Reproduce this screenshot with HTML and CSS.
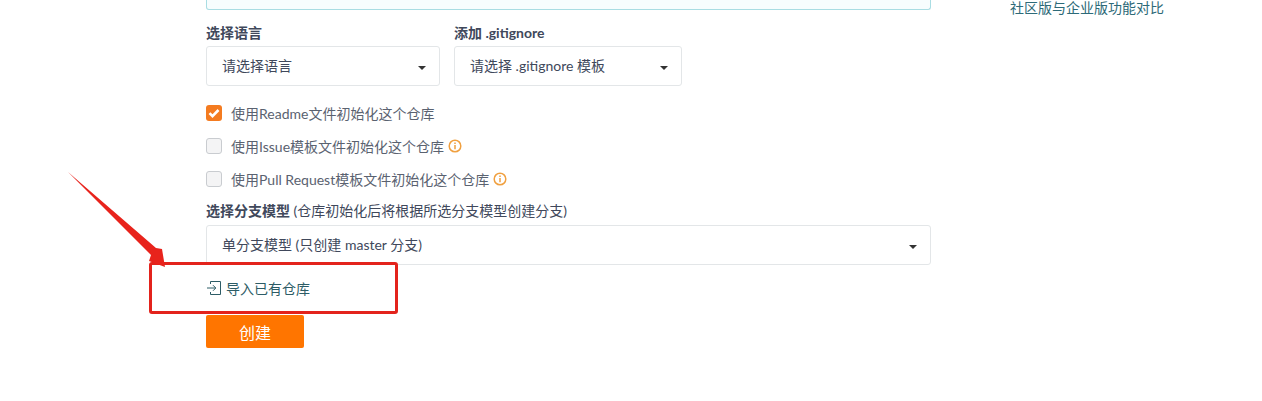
FILE: index.html
```html
<!DOCTYPE html>
<html lang="zh-CN">
<head>
    <meta charset="UTF-8">
    <title>新建仓库</title>
    <link rel="stylesheet" href="styles.css">
</head>
<body>
    <div class="page">
        <form class="repo-form">
            <div class="input-tail"></div>

            <div class="select-row">
                <div class="field">
                    <label class="field-label">选择语言</label>
                    <div class="select select-language">请选择语言</div>
                </div>
                <div class="field">
                    <label class="field-label">添加 .gitignore</label>
                    <div class="select select-ignore">请选择 .gitignore 模板</div>
                </div>
            </div>

            <div class="check-list">
                <div class="check-row">
                    <span class="checkbox checked">
                        <svg viewBox="0 0 16 16" width="16" height="16"><path d="M3.5 8.2l3 3 6-6.2" fill="none" stroke="#fff" stroke-width="2.6"/></svg>
                    </span>
                    使用Readme文件初始化这个仓库
                </div>
                <div class="check-row">
                    <span class="checkbox"></span>
                    使用Issue模板文件初始化这个仓库
                    <svg class="info" viewBox="0 0 14 14" width="14" height="14"><circle cx="7" cy="7" r="5.8" fill="none" stroke="#f0a040" stroke-width="1.5"/><path d="M7 6v4.2M7 3.4v1.5" stroke="#f0a040" stroke-width="1.5"/></svg>
                </div>
                <div class="check-row">
                    <span class="checkbox"></span>
                    使用Pull Request模板文件初始化这个仓库
                    <svg class="info" viewBox="0 0 14 14" width="14" height="14"><circle cx="7" cy="7" r="5.8" fill="none" stroke="#f0a040" stroke-width="1.5"/><path d="M7 6v4.2M7 3.4v1.5" stroke="#f0a040" stroke-width="1.5"/></svg>
                </div>
            </div>

            <div class="field branch-field">
                <label class="field-label">选择分支模型 <span class="field-note">(仓库初始化后将根据所选分支模型创建分支)</span></label>
                <div class="select select-branch">单分支模型 (只创建 master 分支)</div>
            </div>

            <a class="import-link" href="#">
                <svg viewBox="0 0 16 16" width="16" height="16"><path d="M4.5 4V1.5h10v13h-10V12M1 8h8.5M7 5.2L9.8 8 7 10.8" fill="none" stroke="#2d5c66" stroke-width="1"/></svg>
                导入已有仓库
            </a>

            <button class="submit-button" type="button">创建</button>
        </form>

        <div class="side">
            <a class="side-link" href="#">社区版与企业版功能对比</a>
        </div>
    </div>

    <!-- screenshot annotation -->
    <div class="mark-box"></div>
    <svg class="mark-arrow" viewBox="0 0 120 110" width="120" height="110">
        <path d="M1 2L89 78 95 79 98 97 82 91 84 85Z" fill="#e8231c"/>
    </svg>
</body>
</html>
```

FILE: styles.css
```css
* {
    margin: 0;
    padding: 0;
    box-sizing: border-box;
}

body {
    font-family: Lato, "Noto Sans CJK SC", sans-serif;
    font-size: 14px;
    background: #fff;
    color: #40485b;
    overflow: hidden;
}

.page {
    display: flex;
    padding-left: 206px;
}

.repo-form {
    width: 725px;
}

.input-tail {
    height: 10px;
    background: #f7fdfe;
    border: 1px solid #a9dde3;
    border-top: none;
    border-radius: 0 0 3px 3px;
}

.select-row {
    display: flex;
    gap: 14px;
    margin-top: 15px;
}

.field-label {
    display: block;
    height: 21px;
    line-height: 15px;
    font-weight: 700;
    color: #40485b;
}

.field-note {
    font-weight: 400;
}

.select {
    position: relative;
    height: 40px;
    line-height: 38px;
    padding-left: 15px;
    border: 1px solid #e3e6e8;
    border-radius: 3px;
    color: #40485b;
}

.select:after {
    content: '';
    position: absolute;
    right: 13px;
    top: 19px;
    border-left: 4px solid transparent;
    border-right: 4px solid transparent;
    border-top: 4px solid #333;
}

.select-language {
    width: 234px;
}

.select-ignore {
    width: 228px;
}

.check-list {
    margin-top: 10px;
}

.check-row {
    display: flex;
    align-items: center;
    height: 33px;
    color: #5a6270;
}

.checkbox {
    width: 16px;
    height: 16px;
    margin-right: 9px;
    background: #f4f4f5;
    border: 1px solid #c9ccd0;
    border-radius: 3px;
}

.checkbox.checked {
    background: #f47b20;
    border: none;
}

.checkbox svg {
    display: block;
}

.info {
    margin-left: 4px;
}

.branch-field {
    margin-top: 8px;
}

.branch-field .field-label {
    height: 22px;
}

.select-branch {
    width: 725px;
}

.import-link {
    display: flex;
    align-items: center;
    gap: 4px;
    height: 18px;
    margin-top: 14px;
    color: #2d5c66;
    text-decoration: none;
}

.submit-button {
    display: block;
    width: 98px;
    height: 33px;
    margin-top: 18px;
    background: #ff7500;
    border: none;
    border-radius: 2px;
    color: #fff;
    font-family: inherit;
    font-size: 16px;
}

.side {
    padding-left: 79px;
}

.side-link {
    display: block;
    height: 17px;
    margin-top: -1px;
    line-height: 17px;
    color: #2d6a78;
    text-decoration: none;
}

.mark-box {
    position: absolute;
    left: 149px;
    top: 262px;
    width: 249px;
    height: 52px;
    border: 3px solid #e3231c;
    border-radius: 3px;
}

.mark-arrow {
    position: absolute;
    left: 67px;
    top: 170px;
}
```
